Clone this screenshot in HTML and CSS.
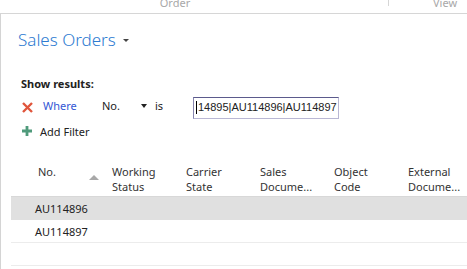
FILE: index.html
```html
<!DOCTYPE html>
<html>
<head>
  <meta charset="utf-8">
  <title>Sales Orders</title>
  <link rel="stylesheet" href="styles.css">
</head>
<body>

  <div class="ribbon">
    <div class="tab tab-order">Order</div>
    <div class="tab-sep"></div>
    <div class="tab tab-view">View</div>
  </div>

  <div class="page">

    <h1 class="title">Sales Orders <span class="caret"></span></h1>

    <div class="filters">
      <div class="filters-label">Show results:</div>

      <div class="filter-row">
        <span class="icon-remove">
          <svg width="11" height="11" viewBox="0 0 11 11"><path d="M1 1 L10 10 M10 1 L1 10" stroke="#e0553c" stroke-width="2.4"/></svg>
        </span>
        <span class="filter-where">Where</span>
        <span class="filter-field">No.</span>
        <span class="caret caret-field"></span>
        <span class="filter-op">is</span>
        <div class="filter-input"><span class="cursor"></span>14895|AU114896|AU114897</div>
      </div>

      <div class="filter-add">
        <span class="icon-add">
          <svg width="10" height="10" viewBox="0 0 10 10"><path d="M5 0 V10 M0 5 H10" stroke="#4f9a7b" stroke-width="2.8"/></svg>
        </span>
        Add Filter
      </div>
    </div>

    <div class="grid">
      <div class="grid-head">
        <div class="col col-no">No.<span class="sort-up"></span></div>
        <div class="col">Working<br>Status</div>
        <div class="col">Carrier<br>State</div>
        <div class="col">Sales<br>Docume...</div>
        <div class="col">Object<br>Code</div>
        <div class="col">External<br>Docume...</div>
      </div>
      <div class="grid-row selected">
        <div class="cell cell-no">AU114896</div>
      </div>
      <div class="grid-row">
        <div class="cell cell-no">AU114897</div>
      </div>
      <div class="grid-row">
        <div class="cell cell-no"></div>
      </div>
    </div>

  </div>

</body>
</html>
```

FILE: styles.css
```css
html, body {
  margin: 0;
  padding: 0;
  background: #fff;
  font-family: "Noto Sans", "Open Sans", sans-serif;
  font-size: 11px;
  line-height: 15px;
  color: #222;
}

.ribbon {
  height: 14px;
  overflow: hidden;
  display: flex;
  align-items: flex-end;
  border-bottom: 1px solid #d6d6d6;
  padding-bottom: 3px;
  box-sizing: border-box;
  color: #a8a8a8;
}

.tab {
  line-height: 14px;
  text-align: center;
}

.tab-order {
  width: 350px;
  padding-right: 38px;
}

.tab-sep {
  align-self: flex-start;
  width: 1px;
  height: 6px;
  background: #d6d6d6;
}

.tab-view {
  padding-left: 44px;
}

.page {
  border-left: 1px solid #d4d4d4;
  height: 255px;
}

.title {
  margin: 0;
  padding: 14px 0 0 17px;
  font-weight: 300;
  font-size: 17px;
  line-height: 23px;
  color: #2e7bd1;
  display: flex;
  align-items: center;
}

.caret {
  display: inline-block;
  width: 0;
  height: 0;
  border-left: 3px solid transparent;
  border-right: 3px solid transparent;
  border-top: 3px solid #444;
  margin-left: 7px;
  margin-top: 2px;
}

.filters {
  padding: 25px 0 0 20px;
}

.filters-label {
  font-weight: bold;
}

.filter-row {
  display: flex;
  align-items: flex-start;
  margin-top: 6px;
  height: 22px;
  line-height: 18px;
}

.icon-remove {
  width: 21px;
  display: flex;
  padding: 5px 0 0 1px;
}

.filter-where {
  width: 59px;
  color: #3457d5;
}

.filter-field {
  width: 39px;
}

.caret-field {
  margin: 7px 8px 0 0;
  border-top-width: 4px;
  border-top-color: #222;
}

.filter-op {
  width: 38px;
}

.filter-input {
  width: 146px;
  height: 22px;
  box-sizing: border-box;
  border: 1px solid #b9b7d4;
  border-top-color: #5b5a8c;
  border-left-color: #8886b0;
  display: flex;
  align-items: center;
  padding: 0 0 2px 2px;
  font-family: "Liberation Sans", Arial, sans-serif;
  line-height: 16px;
  white-space: nowrap;
  overflow: hidden;
}

.cursor {
  width: 1px;
  height: 13px;
  margin-right: 1px;
  background: #000;
}

.filter-add {
  display: flex;
  align-items: flex-start;
  margin-top: 5px;
}

.icon-add {
  width: 18px;
  display: flex;
  padding: 2px 0 0 1px;
}

.grid {
  margin: 21px 0 0 10px;
}

.grid-head {
  display: flex;
  height: 36px;
  color: #333;
  border-bottom: 1px solid #d8d8d8;
  white-space: nowrap;
  overflow: hidden;
}

.col {
  width: 74px;
  flex: none;
  padding-top: 4px;
}

.col-no {
  width: 101px;
  padding-left: 27px;
  padding-right: 13px;
  box-sizing: border-box;
  display: flex;
  justify-content: space-between;
}

.sort-up {
  width: 0;
  height: 0;
  border-left: 5px solid transparent;
  border-right: 5px solid transparent;
  border-bottom: 5px solid #a8a8a8;
  margin-top: 11px;
}

.grid-row {
  height: 22px;
  border-bottom: 1px solid #ececec;
  display: flex;
  align-items: center;
}

.grid-row.selected {
  background: #e0e0e0;
  border-bottom-color: #e0e0e0;
}

.cell-no {
  padding-left: 24px;
}
```
